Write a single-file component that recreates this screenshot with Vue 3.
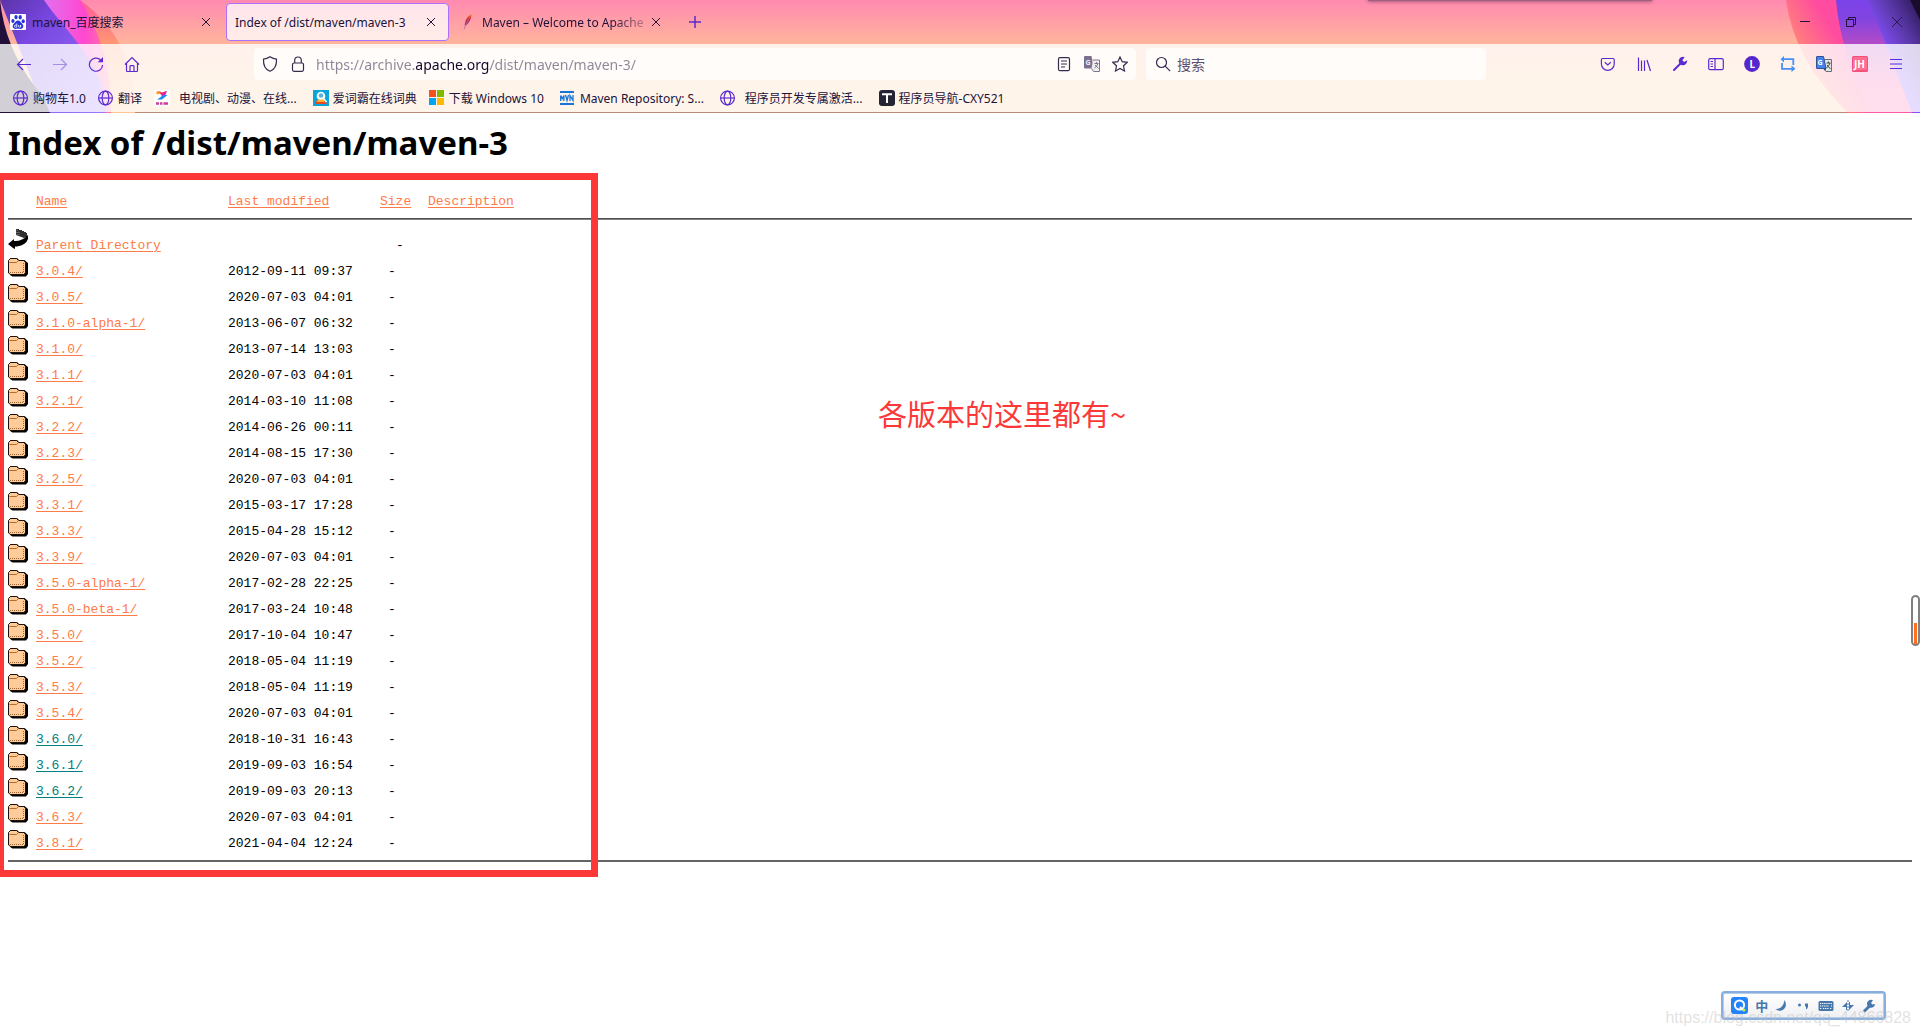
<script setup>
import { ref } from 'vue'

const url = ref('https://archive.apache.org/dist/maven/maven-3/')
const query = ref('')

const bookmarks = [
  { icon: 'globe', label: '购物车1.0' },
  { icon: 'globe', label: '翻译' },
  { icon: 'video', label: '电视剧、动漫、在线...', kind: 'spaced' },
  { icon: 'dict', label: '爱词霸在线词典' },
  { icon: 'windows', label: '下载 Windows 10', kind: 'wide' },
  { icon: 'mvn', label: 'Maven Repository: S...', kind: 'wide' },
  { icon: 'globe', label: '程序员开发专属激活...', kind: 'spaced' },
  { icon: 'tee', label: '程序员导航-CXY521' },
]

const columns = ['Name', 'Last modified', 'Size', 'Description']

const entries = [
  ['3.0.4/', '2012-09-11 09:37'],
  ['3.0.5/', '2020-07-03 04:01'],
  ['3.1.0-alpha-1/', '2013-06-07 06:32'],
  ['3.1.0/', '2013-07-14 13:03'],
  ['3.1.1/', '2020-07-03 04:01'],
  ['3.2.1/', '2014-03-10 11:08'],
  ['3.2.2/', '2014-06-26 00:11'],
  ['3.2.3/', '2014-08-15 17:30'],
  ['3.2.5/', '2020-07-03 04:01'],
  ['3.3.1/', '2015-03-17 17:28'],
  ['3.3.3/', '2015-04-28 15:12'],
  ['3.3.9/', '2020-07-03 04:01'],
  ['3.5.0-alpha-1/', '2017-02-28 22:25'],
  ['3.5.0-beta-1/', '2017-03-24 10:48'],
  ['3.5.0/', '2017-10-04 10:47'],
  ['3.5.2/', '2018-05-04 11:19'],
  ['3.5.3/', '2018-05-04 11:19'],
  ['3.5.4/', '2020-07-03 04:01'],
  ['3.6.0/', '2018-10-31 16:43', true],
  ['3.6.1/', '2019-09-03 16:54', true],
  ['3.6.2/', '2019-09-03 20:13', true],
  ['3.6.3/', '2020-07-03 04:01'],
  ['3.8.1/', '2021-04-04 12:24'],
].map(([name, modified, visited]) => ({ name, modified, visited }))
</script>

<template>
  <div class="window">
    <header class="chrome">
      <svg class="art art-left" width="160" height="113" viewBox="0 0 160 113" aria-hidden="true">
        <defs>
          <linearGradient id="lo" x1="0" y1="0" x2="0" y2="1">
            <stop offset="0" stop-color="#ff5a9c" /><stop offset=".4" stop-color="#ff9a70" /><stop offset="1" stop-color="#ffc890" />
          </linearGradient>
          <linearGradient id="lm" x1="0" y1="0" x2="1" y2="0">
            <stop offset="0" stop-color="#e070f0" /><stop offset=".6" stop-color="#ff48d0" /><stop offset="1" stop-color="#ff7a9a" />
          </linearGradient>
          <linearGradient id="lp" x1="0" y1="0" x2="1" y2="1">
            <stop offset="0" stop-color="#5a34a8" /><stop offset=".3" stop-color="#7846e0" /><stop offset="1" stop-color="#9c7aff" />
          </linearGradient>
        </defs>
        <path d="M80 0Q136 40 135 113H100L60 0Z" fill="url(#lo)" />
        <path d="M44 0H80Q112 50 111 113H60Z" fill="url(#lm)" />
        <path d="M0 0H44C62 28 108 66 106 113H45Z" fill="url(#lp)" />
        <path d="M0 0Q5 48 36 88Q44 98 50 113H0Z" fill="#20103a" />
      </svg>
      <svg class="art art-right" width="330" height="113" viewBox="0 0 330 113" aria-hidden="true">
        <defs>
          <linearGradient id="rp" x1="196" y1="30" x2="246" y2="0" gradientUnits="userSpaceOnUse">
            <stop offset="0" stop-color="#ff8478" /><stop offset=".7" stop-color="#ff4ba0" /><stop offset="1" stop-color="#ff4ba0" />
          </linearGradient>
          <linearGradient id="rv" x1="0" y1="0" x2="0" y2="1">
            <stop offset="0" stop-color="#7a42e8" /><stop offset=".16" stop-color="#8044e0" /><stop offset=".45" stop-color="#c24cc0" /><stop offset=".8" stop-color="#ff5aa8" />
          </linearGradient>
          <linearGradient id="rb" x1="285" y1="35" x2="325" y2="12" gradientUnits="userSpaceOnUse">
            <stop offset="0" stop-color="#8450fa" /><stop offset=".6" stop-color="#5a38a8" /><stop offset="1" stop-color="#3a2270" />
          </linearGradient>
        </defs>
        <path d="M196 0H330V113H258Q204 60 196 0Z" fill="url(#rp)" />
        <path d="M246 0H290L322 113H280Q250 50 246 0Z" fill="url(#rv)" />
        <path d="M278 0Q300 54 322 113H330V0Z" fill="url(#rb)" />
        <path d="M320 0L330 20V0Z" fill="#180c2c" />
      </svg>

      <div class="tabs">
        <div class="tab">
          <svg width="16" height="16" viewBox="0 0 16 16"><rect width="16" height="16" rx="1" fill="#fff" /><g fill="#2a32dc"><ellipse cx="2.9" cy="7" rx="1.6" ry="2.1" /><ellipse cx="6" cy="3.1" rx="1.6" ry="2.2" /><ellipse cx="10.2" cy="3.2" rx="1.6" ry="2.2" /><ellipse cx="13.2" cy="7.2" rx="1.6" ry="2" /><path d="M8 6.6c2 0 2.600 1.600 4 2.900 2.400 2.300 1.300 5.500-1.500 5.400-1 0-1.500-.3-2.500-.3s-1.500.3-2.500.3c-2.900 0-3.800-3.200-1.500-5.400C5.400 8.200 6 6.600 8 6.600Z" /></g><path d="M6.800 9.500v3.700H5.200c-1.100 0-1.100-2 0-2h1.600M8.600 11v1.500c0 .9 2 .9 2 0V11v2.300" fill="none" stroke="#fff" stroke-width=".8" /></svg>
          <button class="tab-label">maven_百度搜索</button>
          <button class="close" aria-label="关闭标签页"><svg width="10" height="10" viewBox="0 0 10 10"><path d="M1 1l8 8M9 1l-8 8" /></svg></button>
        </div>
        <div class="tab active">
          <button class="tab-label">Index of /dist/maven/maven-3</button>
          <button class="close" aria-label="关闭标签页"><svg width="10" height="10" viewBox="0 0 10 10"><path d="M1 1l8 8M9 1l-8 8" /></svg></button>
        </div>
        <div class="tab">
          <svg width="16" height="16" viewBox="0 0 16 16"><defs><linearGradient id="feather" x1="0" y1="0" x2="0" y2="1"><stop offset="0" stop-color="#f49a20" /><stop offset=".4" stop-color="#d8283c" /><stop offset="1" stop-color="#8a3c98" /></linearGradient></defs><path d="M11.500 0C8 1.500 5 6 4.600 11.500l.7.2C9 9.500 11.500 5 11.500 0Z" fill="url(#feather)" /><path d="M9.500 4Q6 9 4 15.500" fill="none" stroke="#b86a90" stroke-width=".8" /></svg>
          <button class="tab-label fade">Maven – Welcome to Apache</button>
          <button class="close" aria-label="关闭标签页"><svg width="10" height="10" viewBox="0 0 10 10"><path d="M1 1l8 8M9 1l-8 8" /></svg></button>
        </div>
        <button class="new-tab" aria-label="新建标签页"><svg width="12" height="12" viewBox="0 0 12 12"><path d="M6 0v12M0 6h12" stroke="#5b2ad0" stroke-width="1.500" /></svg></button>
        <div class="window-controls">
          <button aria-label="最小化"><svg width="10" height="10" viewBox="0 0 10 10"><path d="M0 4.500h10" /></svg></button>
          <button aria-label="还原"><svg width="10" height="10" viewBox="0 0 10 10"><path d="M.5 2.500h7v7h-7zM2.500 2.500v-2h7v7h-2" /></svg></button>
          <button aria-label="关闭"><svg width="10" height="10" viewBox="0 0 10 10"><path d="M0 0l10 10M10 0l-10 10" stroke-width=".8" /></svg></button>
        </div>
      </div>

      <nav class="toolbar">
        <button class="tool" aria-label="后退"><svg class="line" width="16" height="16" viewBox="0 0 16 16"><path d="M15 8.500H1.500M7 3L1.500 8.500 7 14" /></svg></button>
        <button class="tool off" aria-label="前进" disabled><svg class="line" width="16" height="16" viewBox="0 0 16 16"><path d="M1 8.500h13.500M9 3l5.500 5.500L9 14" /></svg></button>
        <button class="tool" aria-label="刷新"><svg class="line" width="16" height="16" viewBox="0 0 16 16"><path d="M12.500 3.800A6.600 6.600 0 1 0 14.600 9" /><path d="M15 1v5.300H9.700Z" fill="#5b2ad0" stroke="none" /></svg></button>
        <button class="tool" aria-label="主页"><svg class="line" width="16" height="16" viewBox="0 0 16 16"><path d="M1 8.500L8 1.500l7 7M2.500 7.500v7q0 1 1 1h9q1 0 1-1v-7M6 15.500v-5q0-.8.8-.8h2.400q.8 0 .8.8v5" /></svg></button>
        <span class="gap"></span>
        <div class="field url">
          <button class="ficon" aria-label="跟踪保护"><svg class="dark" width="16" height="16" viewBox="0 0 16 16"><path d="M8 .8Q11 3 14.500 3.200C14.800 9 12.500 13.500 8 15.300 3.500 13.500 1.200 9 1.500 3.200 5 3 8 .8 8 .8Z" /></svg></button>
          <button class="ficon" aria-label="连接安全"><svg class="dark" width="16" height="16" viewBox="0 0 16 16"><rect x="2.500" y="7" width="11" height="8.300" rx="1.500" /><path d="M4.700 7V4.300a3.300 3.300 0 0 1 6.600 0V7" /></svg></button>
          <input v-model="url" class="address" type="text" aria-label="网址" />
          <button class="ficon" aria-label="阅读模式"><svg class="dark" width="16" height="16" viewBox="0 0 16 16"><rect x="2.500" y="1.700" width="11" height="13" rx="1.500" /><path d="M5 5h6M5 8h6M5 11h4" /></svg></button>
          <button class="ficon" aria-label="翻译此页"><svg width="16" height="16" viewBox="0 0 16 16"><path d="M0 1q0-1 1-1h6.500l2.500 12.500H1q-1 0-1-1Z" fill="#7c7090" /><path d="M9 4h6.500v11.500H9.500L7.500 12.500" fill="#eee" stroke="#80768e" /><text x="1.500" y="8.500" font-size="7" font-weight="700" fill="#eee">G</text><path d="M10.500 7.500h4M12.500 6v1.500M14 7.500q-1 3-3.500 4.500M11 9l3.500 3.500" fill="none" stroke="#80768e" /></svg></button>
          <button class="ficon" aria-label="添加书签"><svg class="dark" width="16" height="16" viewBox="0 0 16 16"><path d="M8 1l2.200 4.700 5.100.6-3.800 3.500 1 5.200L8 12.500 3.500 15l1-5.200L.7 6.300l5.100-.6Z" /></svg></button>
        </div>
        <div class="field search">
          <svg class="dark" width="16" height="16" viewBox="0 0 16 16"><circle cx="6.500" cy="6.500" r="5" /><path d="M10.200 10.200l5 5" /></svg>
          <input v-model="query" type="text" placeholder="搜索" aria-label="搜索" />
        </div>
        <span class="gap"></span>
        <button class="tool" aria-label="Pocket"><svg class="line" width="16" height="16" viewBox="0 0 16 16"><path d="M2.500 2.500h10.500q1.200 0 1.200 1.200V8a6.400 6.400 0 0 1-12.800 0V3.700q0-1.200 1.100-1.200ZM4.800 6.200L7.800 9l3-2.800" /></svg></button>
        <button class="tool" aria-label="书库"><svg class="line" width="16" height="16" viewBox="0 0 16 16"><path d="M2.500 1.500V15M5.500 4.500V15M8.500 4.500V15M11 4l3.500 11" /></svg></button>
        <button class="tool" aria-label="开发工具"><svg width="16" height="16" viewBox="0 0 16 16"><path d="M2 14L9.500 6.500" stroke="#5b2ad0" stroke-width="2" stroke-linecap="round" /><path d="M12.600 1.200A4.200 4.200 0 1 0 15 4.200L12.200 6 10.300 4.300Z" fill="#5b2ad0" /></svg></button>
        <button class="tool" aria-label="侧栏"><svg class="line" width="16" height="16" viewBox="0 0 16 16"><rect x=".7" y="2.700" width="14.600" height="11" rx="1.500" /><path d="M7 3v10.500M2.500 5.500H5M2.500 8H5M2.500 10.500H5" /></svg></button>
        <button class="tool" aria-label="账户"><svg width="16" height="16" viewBox="0 0 16 16"><circle cx="8" cy="8" r="7.900" fill="#5426cc" /><text x="5.500" y="12" font-size="10" font-weight="700" fill="#fff">L</text></svg></button>
        <button class="tool" aria-label="循环"><svg width="16" height="16" viewBox="0 0 16 16"><path d="M3 3.200h10.300V9M12 12.800H2V7" fill="none" stroke="#4790f8" stroke-width="1.800" /><path d="M.5 3.200L4 0v6.500ZM15.500 12.800l-4-3.300V16Z" fill="#4790f8" /></svg></button>
        <button class="tool" aria-label="翻译"><svg width="16" height="16" viewBox="0 0 16 16"><path d="M8 3.500h7.500v12H10L7 12" fill="#e8e6e0" stroke="#607080" /><path d="M10.500 7h4M12.500 5.500V7M14 7q-1 3-3.500 5M11 9l3.500 4" fill="none" stroke="#404850" /><path d="M.5 1q0-.5.500-.5h6.500l2.500 12H1q-.5 0-.5-.5Z" fill="#4484f0" stroke="#34508c" /><path d="M7.500 12.500H10L9.500 15Z" fill="#20386c" /><text x="1.500" y="9" font-size="7" font-weight="700" fill="#fff">G</text></svg></button>
        <button class="tool" aria-label="JH"><svg width="16" height="16" viewBox="0 0 16 16"><rect width="16" height="16" rx="1.500" fill="#f0507c" /><rect x="1" y="1" width="14" height="13" rx="1" fill="#ff6c90" /><text x="2" y="12" font-size="10" font-weight="700" fill="#fff">JH</text></svg></button>
        <button class="tool" aria-label="菜单"><svg class="line" width="16" height="16" viewBox="0 0 16 16"><path d="M2 3.500h12M2 8h12M2 12.500h12" /></svg></button>
      </nav>

      <nav class="bookmarks" aria-label="书签">
        <a v-for="b in bookmarks" :key="b.label" href="#" :class="b.kind">
          <svg v-if="b.icon === 'globe'" class="line" width="16" height="16" viewBox="0 0 16 16"><circle cx="7.500" cy="8" r="6.900" /><ellipse cx="7.500" cy="8" rx="3.300" ry="6.900" /><path d="M.6 8h13.800" /></svg>
          <svg v-else-if="b.icon === 'video'" width="16" height="16" viewBox="0 0 16 16"><rect width="16" height="16" fill="#fff" /><path d="M3 1.500h3l2 1 4.500-1.500L9.500 4.500H7Z" fill="#f43c50" /><path d="M7 3.500l6-2.500-2 5-3 1Z" fill="#e020a0" /><path d="M3 9.500L9.500 5h4L8 9.500Z" fill="#1c8cf0" /><circle cx="3.800" cy="2.800" r="1.600" fill="#ff9e20" /><path d="M2 13.500h3M6 13.500h2.500M9.500 13.500H14" stroke="#d03c9c" stroke-width="2.400" /></svg>
          <svg v-else-if="b.icon === 'dict'" width="16" height="16" viewBox="0 0 16 16"><rect width="16" height="16" fill="#08a4dc" /><path d="M2 14l2-4h7l3 4Z" fill="#e84820" /><circle cx="8" cy="6" r="4.300" fill="#fff" /><circle cx="8" cy="5.500" r="2.300" fill="#58b4d8" /><path d="M5 9.500h6V12H4Z" fill="#ffb428" /><path d="M10.500 8.500l3 3.500" stroke="#fff" stroke-width="1.600" /></svg>
          <svg v-else-if="b.icon === 'windows'" width="16" height="16" viewBox="0 0 16 16"><path d="M0 0h7v7H0Z" fill="#f4511e" /><path d="M8 0h7v7H8Z" fill="#7fba00" /><path d="M0 8h7v7H0Z" fill="#00a4ef" /><path d="M8 8h7v7H8Z" fill="#ffb900" /></svg>
          <svg v-else-if="b.icon === 'mvn'" width="16" height="16" viewBox="0 0 16 16"><path d="M0 1h14v2H0ZM0 13h14v2H0Z" fill="#1874d8" /><path d="M.7 11V5.500l1.600 3 1.600-3V11M5.500 5l1.500 5.500L8.500 5M10 11V5.500l3 5V5" fill="none" stroke="#1874d8" stroke-width="1.300" /></svg>
          <svg v-else width="16" height="16" viewBox="0 0 16 16"><rect width="16" height="16" rx="3" fill="#242434" /><path d="M3 3.200h10v2H9V13H7V5.200H3Z" fill="#fff" /></svg>
          <span>{{ b.label }}</span>
        </a>
      </nav>
      <div class="overlay-edge"></div>
    </header>

    <main class="page">
      <h1>Index of /dist/maven/maven-3</h1>
      <div class="listing">
        <table>
          <colgroup><col class="c-icon" /><col class="c-name" /><col class="c-date" /><col class="c-size" /><col /></colgroup>
          <thead>
            <tr><th></th><th v-for="c in columns" :key="c"><a href="#">{{ c }}</a></th></tr>
          </thead>
          <tbody>
            <tr class="parent">
              <td class="icon"><svg width="20" height="20" viewBox="0 0 20 20"><path d="M8 0h3v1h3v1h2v1h2v1h1v4l-3 1L8 6Z" fill="#303030" /><path d="M9 1v5M11 3v4M8.500 3.500h2" stroke="#999" stroke-width=".7" stroke-dasharray="1 1" /><path d="M0 15l6-5v2q8 .5 14-6V10q-2 6-11 7.500H7V20l-2-1Z" fill="#000" /></svg></td>
              <td><a href="#">Parent Directory</a></td>
              <td></td>
              <td>-</td>
              <td></td>
            </tr>
            <tr v-for="e in entries" :key="e.name">
              <td class="icon"><svg width="20" height="20" viewBox="0 0 20 20"><path d="M2 1h7l2 2h5.500L20 6v11l-2 2.500H4.500L2 18Z" fill="#000" /><path d="M.5 3.500L2.500 1.500h6l2 2h5.500l1.500 2v10l-1.500 2H2.500l-2-1.500Z" fill="#ffcc99" stroke="#1c1008" /><path d="M1.500 5.500h7l2-2" fill="none" stroke="#b06c2c" /><path d="M2 15.500h13" stroke="#996633" stroke-dasharray="1 1" /><path d="M15.500 6v9" stroke="#996633" stroke-dasharray="1 1" /></svg></td>
              <td><a href="#" :class="{ visited: e.visited }">{{ e.name }}</a></td>
              <td>{{ e.modified }}</td>
              <td>-</td>
              <td></td>
            </tr>
          </tbody>
        </table>
        <div class="frame"></div>
      </div>
      <p class="note">各版本的这里都有~</p>
    </main>

    <div class="gauge"><span></span></div>
    <div class="ime">
      <svg width="17" height="17" viewBox="0 0 17 17"><rect width="17" height="17" rx="3" fill="#2482fa" /><circle cx="8.500" cy="8" r="4.600" fill="none" stroke="#fff" stroke-width="2" /><path d="M9 10l3 3" stroke="#fff" stroke-width="2" /><circle cx="13" cy="13" r="1.600" fill="#b4f03c" /></svg>
      <span>中</span>
      <svg width="14" height="14" viewBox="0 0 14 14"><path d="M9 1a6 6 0 1 1-8.500 9A8 8 0 0 0 9 1Z" /></svg>
      <svg width="14" height="14" viewBox="0 0 14 14"><circle cx="3.500" cy="6" r="1.500" /><path d="M9 4.500h3v3q0 2-2 3v-3H9Z" /></svg>
      <svg width="16" height="14" viewBox="0 0 16 14"><rect x=".5" y="2" width="15" height="10" rx="1.500" /><path d="M2 4.500h12M2 7h9M13 7h1M2 9.500h2M5 9.500h6M12 9.500h2" stroke="#fff" stroke-dasharray="1.300 .8" /></svg>
      <svg width="14" height="14" viewBox="0 0 14 14"><path d="M1 8l5-5v8H5V8ZM13 6L8 11V3h1v3Z" /><path d="M7 1v12" stroke="#4678ac" stroke-dasharray="2 1" /></svg>
      <svg width="14" height="14" viewBox="0 0 14 14"><path d="M2 12.500L8 6.500" stroke="#4678ac" stroke-width="3" /><path d="M11 1.300A4 4 0 1 0 13 5L10.500 5.500 9 4Z" /></svg>
    </div>
    <p class="watermark">https://blog.csdn.net/qq_44866828</p>
  </div>
</template>

<style>
body { margin: 0; background: #fff; }
</style>

<style scoped>
.window {
  position: relative;
  min-height: 100vh;
  overflow: hidden;
  background: #fff;
  font-family: "Noto Sans", "Noto Sans CJK SC", sans-serif;
  font-size: 12px;
  color: #20123a;
}
button {
  padding: 0;
  border: 0;
  background: none;
  font: inherit;
  color: inherit;
  display: flex;
  align-items: center;
  justify-content: center;
}
svg { display: block; flex: none; }
.chrome {
  position: relative;
  border-bottom: 1px solid #b88a78;
  background: linear-gradient(#ff8ab0, #ffb59c 44px, #ffc898 80px);
}
.art { position: absolute; top: 0; }
.art-left { left: 0; }
.art-right { right: 0; }
.tabs { position: relative; display: flex; height: 44px; }
.tab {
  display: flex;
  align-items: center;
  gap: 6px;
  box-sizing: border-box;
  width: 223px;
  height: 38px;
  margin: 3px 1px;
  padding: 0 12px 0 8px;
  border: 1px solid transparent;
  border-radius: 4px;
}
.tab.active { border-color: #ac70ff; background: rgba(255, 255, 255, .76); }
.tab-label { flex: 1; min-width: 0; overflow: hidden; white-space: nowrap; justify-content: flex-start; }
.fade { mask-image: linear-gradient(to right, #000 130px, transparent 176px); }
.close svg, .window-controls svg { fill: none; stroke: #20123a; }
.new-tab { width: 36px; margin: 4px 0 4px 2px; }
.window-controls { display: flex; margin-left: auto; }
.window-controls button { width: 46px; }
.toolbar {
  position: relative;
  display: flex;
  align-items: center;
  height: 40px;
  padding: 0 6px;
  background: rgba(255, 255, 255, .8);
}
.tool { width: 36px; height: 36px; flex: none; }
.off { opacity: .45; }
.line { fill: none; stroke: #5b2ad0; stroke-width: 1.2; }
.dark { fill: none; stroke: #362a50; stroke-width: 1.2; }
.gap { flex: 0 1 104px; }
.field {
  display: flex;
  align-items: center;
  height: 32px;
  border-radius: 4px;
  background: #fffcf9;
  box-sizing: border-box;
}
.url { flex: 1; padding: 0 2px; }
.ficon { width: 28px; height: 28px; flex: none; }
.search { width: 340px; margin-left: 10px; padding-left: 9px; gap: 6px; }
input {
  flex: 1;
  min-width: 0;
  padding: 0;
  border: 0;
  outline: 0;
  background: none;
  font: inherit;
  font-size: 14px;
  color: #20123a;
}
input::placeholder { color: #5c5070; opacity: 1; }
.address {
  padding-left: 4px;
  color: transparent;
  background: linear-gradient(to right, #8c8698 102px, #15072c 102px 178px, #8c8698 178px);
  background-clip: text;
}
.bookmarks {
  position: relative;
  display: flex;
  align-items: center;
  height: 28px;
  padding: 0 7px;
  background: rgba(255, 255, 255, .8);
}
.bookmarks a {
  display: flex;
  align-items: center;
  gap: 4px;
  padding: 0 6px;
  color: inherit;
  text-decoration: none;
  white-space: nowrap;
}
.bookmarks .spaced { gap: 9px; padding-right: 10px; }
.bookmarks .wide { padding-right: 10px; }
.overlay-edge {
  position: absolute;
  top: -4px;
  left: 1368px;
  width: 284px;
  height: 5px;
  background: #a06080;
  box-shadow: 0 0 4px #804060;
}
.page { position: relative; padding: 8px 8px 60px; color: #000; }
h1 { margin: 0 0 24px; font-size: 33px; line-height: 44px; }
.listing {
  position: relative;
  font-family: "Liberation Mono", monospace;
  font-size: 13px;
}
table { width: 100%; table-layout: fixed; border-collapse: separate; border-spacing: 0; }
.c-icon { width: 28px; }
.c-name { width: 192px; }
.c-date { width: 152px; }
.c-size { width: 48px; }
th, td { padding: 0; text-align: left; font-weight: 400; vertical-align: top; white-space: nowrap; }
th { padding-bottom: 3px; border-bottom: 1px solid #505050; line-height: 26px; }
td { padding-top: 4px; line-height: 22px; }
td.icon { padding-top: 0; }
.parent td { padding-top: 15px; border-top: 1px solid #828282; }
.parent td.icon { padding-top: 9px; }
tbody tr:last-child td { padding-bottom: 5px; border-bottom: 2px solid #646464; }
td:nth-child(4) { padding-left: 8px; }
.parent td:nth-child(4) { padding-left: 16px; }
.listing a { color: #ff7b47; text-underline-offset: 2px; }
.listing a.visited { color: #008080; }
.frame {
  position: absolute;
  top: -16px;
  bottom: -15px;
  left: -8px;
  width: 598px;
  box-sizing: border-box;
  border: solid #fc3838;
  border-width: 7px 7px 7px 4px;
  pointer-events: none;
}
.note {
  position: absolute;
  top: 279px;
  left: 878px;
  margin: 0;
  font-family: "Noto Sans CJK SC", sans-serif;
  font-size: 29px;
  line-height: 42px;
  color: #fc3838;
}
.gauge {
  position: absolute;
  top: 595px;
  right: 0;
  display: flex;
  align-items: flex-end;
  justify-content: center;
  box-sizing: border-box;
  width: 9px;
  height: 51px;
  border: 2px solid #808080;
  border-radius: 5px;
}
.gauge span { width: 3px; height: 21px; background: #ff7020; }
.ime {
  position: absolute;
  right: 34px;
  bottom: 16px;
  display: flex;
  align-items: center;
  justify-content: space-between;
  box-sizing: border-box;
  width: 165px;
  height: 29px;
  padding: 0 8px;
  border: 2px solid #88aede;
  border-radius: 4px;
  background: linear-gradient(#fff, #f0f0f4);
  box-shadow: inset 0 0 0 1px #b4cce8;
  color: #4678ac;
  font-size: 13px;
  font-weight: 700;
}
.ime svg { fill: #4678ac; }
.watermark {
  position: absolute;
  right: 9px;
  bottom: 8px;
  margin: 0;
  font: 16px/20px "Liberation Sans", sans-serif;
  color: rgba(190, 190, 190, .45);
}
</style>
